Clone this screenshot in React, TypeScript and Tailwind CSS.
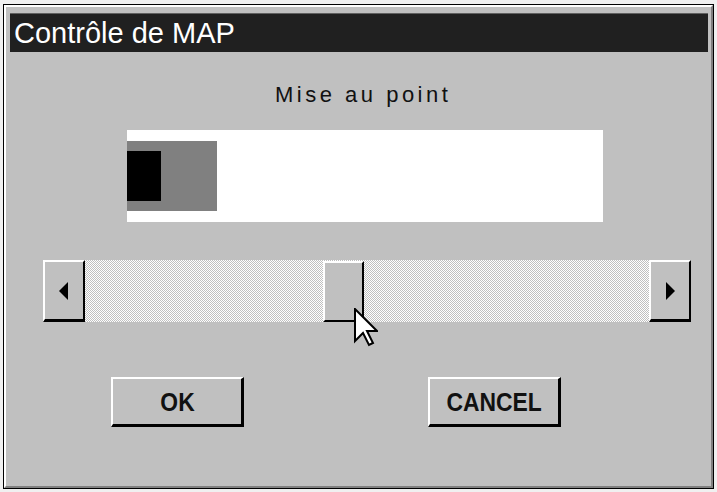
import React from "react";

function Cursor() {
  return (
    <svg width="24" height="40" viewBox="0 0 24 40" className="absolute left-[354px] top-[308px]">
      <path
        d="M1 1 L1 33 L9 25 L15 37 L19 35 L13 23 L23 23 Z"
        fill="#ffffff"
        stroke="#000000"
        strokeWidth="2"
        strokeLinejoin="miter"
      />
    </svg>
  );
}

export default function App() {
  const font = { fontFamily: '"Liberation Sans", Arial, sans-serif' };
  return (
    <div className="relative w-[717px] h-[492px] bg-[#f0f0f0] pt-[4px] pb-[3px] pl-[3px] pr-[3px]" style={font}>
      <div className="h-full border border-black">
        <div className="h-full bg-[#c0c0c0] border-t-2 border-l-2 border-white border-b-2 border-r-2 border-b-[#808080] border-r-[#808080] pt-[6px] pl-[4px] pr-[3px] flex flex-col">
          {/* Title bar */}
          <div className="h-[39px] bg-[#202020] border-t border-[#606060] flex items-center pl-[4px]">
            <span className="text-white text-[29px] leading-[39px]">Contrôle de MAP</span>
          </div>

          {/* Label */}
          <div className="mt-[30px] h-[25px] pl-[265px]">
            <span className="text-[22px] leading-[25px] tracking-[3.5px] text-[#111]">Mise au point</span>
          </div>

          {/* Focus display */}
          <div className="mt-[23px] ml-[117px] w-[476px] h-[92px] bg-white flex items-center">
            <div className="w-[90px] h-[70px] bg-[#808080] flex items-center">
              <div className="w-[34px] h-[50px] bg-black" />
            </div>
          </div>

          {/* Scrollbar */}
          <div className="mt-[38px] ml-[33px] w-[648px] h-[62px] flex">
            <div className="w-[42px] h-full bg-[#c0c0c0] border-t-2 border-l-2 border-white border-b-[3px] border-r-2 border-b-black border-r-black flex items-center justify-center">
              <svg width="10" height="18" viewBox="0 0 10 18">
                <path d="M9 0 L0 9 L9 18 Z" fill="#000" />
              </svg>
            </div>
            <div className="flex-1 h-full bg-[image:repeating-conic-gradient(#c0c0c0_0%_25%,#ffffff_0%_50%)] bg-[length:2px_2px] flex">
              <div className="ml-[238px] mt-[1px] w-[41px] h-[61px] bg-[#c0c0c0] border-t-2 border-l-2 border-white border-b-2 border-r-2 border-b-black border-r-black" />
            </div>
            <div className="w-[42px] h-full bg-[#c0c0c0] border-t-2 border-l-2 border-white border-b-[3px] border-r-2 border-b-black border-r-black flex items-center justify-center">
              <svg width="10" height="18" viewBox="0 0 10 18">
                <path d="M1 0 L10 9 L1 18 Z" fill="#000" />
              </svg>
            </div>
          </div>

          {/* Buttons */}
          <div className="mt-[55px] flex">
            <div className="ml-[101px] w-[133px] h-[50px] bg-[#c0c0c0] border-t-2 border-l-2 border-white border-b-[3px] border-r-[3px] border-b-black border-r-black flex items-center justify-center">
              <span className="inline-block text-[26px] font-bold text-[#111] leading-none scale-x-[0.88]">OK</span>
            </div>
            <div className="ml-[184px] w-[133px] h-[50px] bg-[#c0c0c0] border-t-2 border-l-2 border-white border-b-[3px] border-r-[3px] border-b-black border-r-black flex items-center justify-center">
              <span className="inline-block text-[26px] font-bold text-[#111] leading-none scale-x-[0.88]">CANCEL</span>
            </div>
          </div>
        </div>
      </div>
      <Cursor />
    </div>
  );
}
